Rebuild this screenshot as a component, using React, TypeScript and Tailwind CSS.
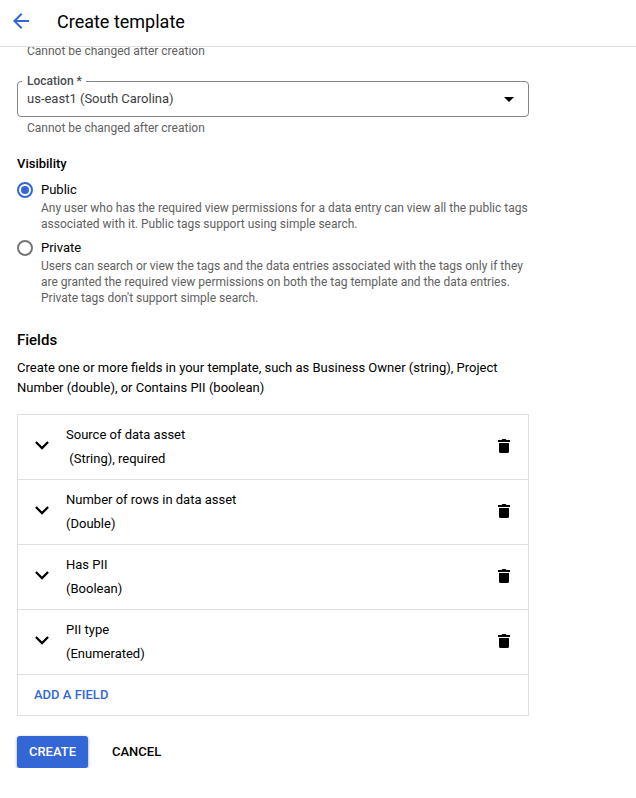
const fields = [
  { name: "Source of data asset", type: "\u00a0(String), required" },
  { name: "Number of rows in data asset", type: "(Double)" },
  { name: "Has PII", type: "(Boolean)" },
  { name: "PII type", type: "(Enumerated)" },
];

function Chevron() {
  return (
    <svg className="mb-[3px]" width="14" height="9" viewBox="0 0 14 9" fill="none" stroke="#000" strokeWidth="2.2">
      <path d="M0.9 1L7 7.1L13.1 1" />
    </svg>
  );
}

function Trash() {
  return (
    <svg className="mb-0.5" width="12" height="14" viewBox="0 0 12 14" fill="#000">
      <path d="M0 1H3.5L4.5 0H7.5L8.5 1H12V3H0Z" />
      <path d="M1 4H11V12.5Q11 14 9.5 14H2.5Q1 14 1 12.5Z" />
    </svg>
  );
}

function Option({ label, text, checked }: { label: string; text: string; checked?: boolean }) {
  return (
    <label className="flex gap-2">
      <span
        className={
          checked
            ? "mt-0.5 flex size-4 shrink-0 items-center justify-center rounded-full border-2 border-[#3367d6]"
            : "mt-0.5 size-4 shrink-0 rounded-full border-2 border-[#757575]"
        }
      >
        {checked && <span className="size-2 rounded-full bg-[#3367d6]" />}
      </span>
      <span className="w-[488px]">
        <span className="block text-[13px] leading-5">{label}</span>
        <span className="block text-xs leading-4 text-[#616161]">{text}</span>
      </span>
    </label>
  );
}

export default function App() {
  return (
    <div className="flex h-[798px] w-[636px] flex-col overflow-hidden bg-white font-['Roboto',sans-serif] text-[13px] text-black">
      <header className="flex h-[47px] shrink-0 items-center border-b border-[#e0e0e0] pb-1 pl-[9px]">
        <svg width="24" height="24" viewBox="0 0 24 24" fill="#3367d6">
          <path d="M20 11H7.83l5.59-5.59L12 4l-8 8 8 8 1.41-1.41L7.83 13H20v-2z" />
        </svg>
        <h1 className="mt-0.5 ml-6 text-lg leading-6">Create template</h1>
      </header>
      <main className="overflow-hidden pl-[17px]">
        <div className="w-[512px]">
          <p className="-mt-1 pl-2.5 text-xs leading-4 text-[#616161]">Cannot be changed after creation</p>
          <div className="relative mt-[22px] flex h-9 items-center justify-between rounded border border-[#80868b] pr-3.5 pl-[9px]">
            <span className="absolute -top-[9px] left-1 bg-white pr-1 pl-[5px] text-xs leading-4 font-medium text-[#4a4d51]">
              Location *
            </span>
            <span className="text-[#3c4043]">us-east1 (South Carolina)</span>
            <svg width="10" height="5" viewBox="0 0 10 5">
              <path d="M0 0L5 5L10 0Z" />
            </svg>
          </div>
          <p className="mt-[3px] pl-2.5 text-xs leading-4 text-[#616161]">Cannot be changed after creation</p>

          <h2 className="mt-[18px] mb-1.5 leading-5 font-medium">Visibility</h2>
          <div className="flex flex-col gap-1.5">
            <Option
              checked
              label="Public"
              text="Any user who has the required view permissions for a data entry can view all the public tags associated with it. Public tags support using simple search."
            />
            <Option
              label="Private"
              text="Users can search or view the tags and the data entries associated with the tags only if they are granted the required view permissions on both the tag template and the data entries. Private tags don't support simple search."
            />
          </div>

          <h2 className="mt-6 text-[15px] leading-5 font-medium">Fields</h2>
          <p className="mt-2 leading-5">
            Create one or more fields in your template, such as Business Owner (string), Project Number (double), or
            Contains PII (boolean)
          </p>

          <div className="mt-4 border border-[#e0e0e0]">
            {fields.map((f) => (
              <div key={f.name} className="flex h-[65px] items-center border-b border-[#e0e0e0] pr-[18px] pl-[17px]">
                <Chevron />
                <div className="ml-[17px] flex-1 pb-px leading-6">
                  <div>{f.name}</div>
                  <div>{f.type}</div>
                </div>
                <Trash />
              </div>
            ))}
            <button className="flex h-10 items-center pl-4 font-medium text-[#3367d6]">ADD A FIELD</button>
          </div>

          <div className="mt-5 flex h-8">
            <button className="w-[71px] rounded-[3px] bg-[#3367d6] font-medium text-white shadow-[0_1px_3px_rgba(0,0,0,0.45)]">
              CREATE
            </button>
            <button className="ml-6 font-medium">CANCEL</button>
          </div>
        </div>
      </main>
    </div>
  );
}
